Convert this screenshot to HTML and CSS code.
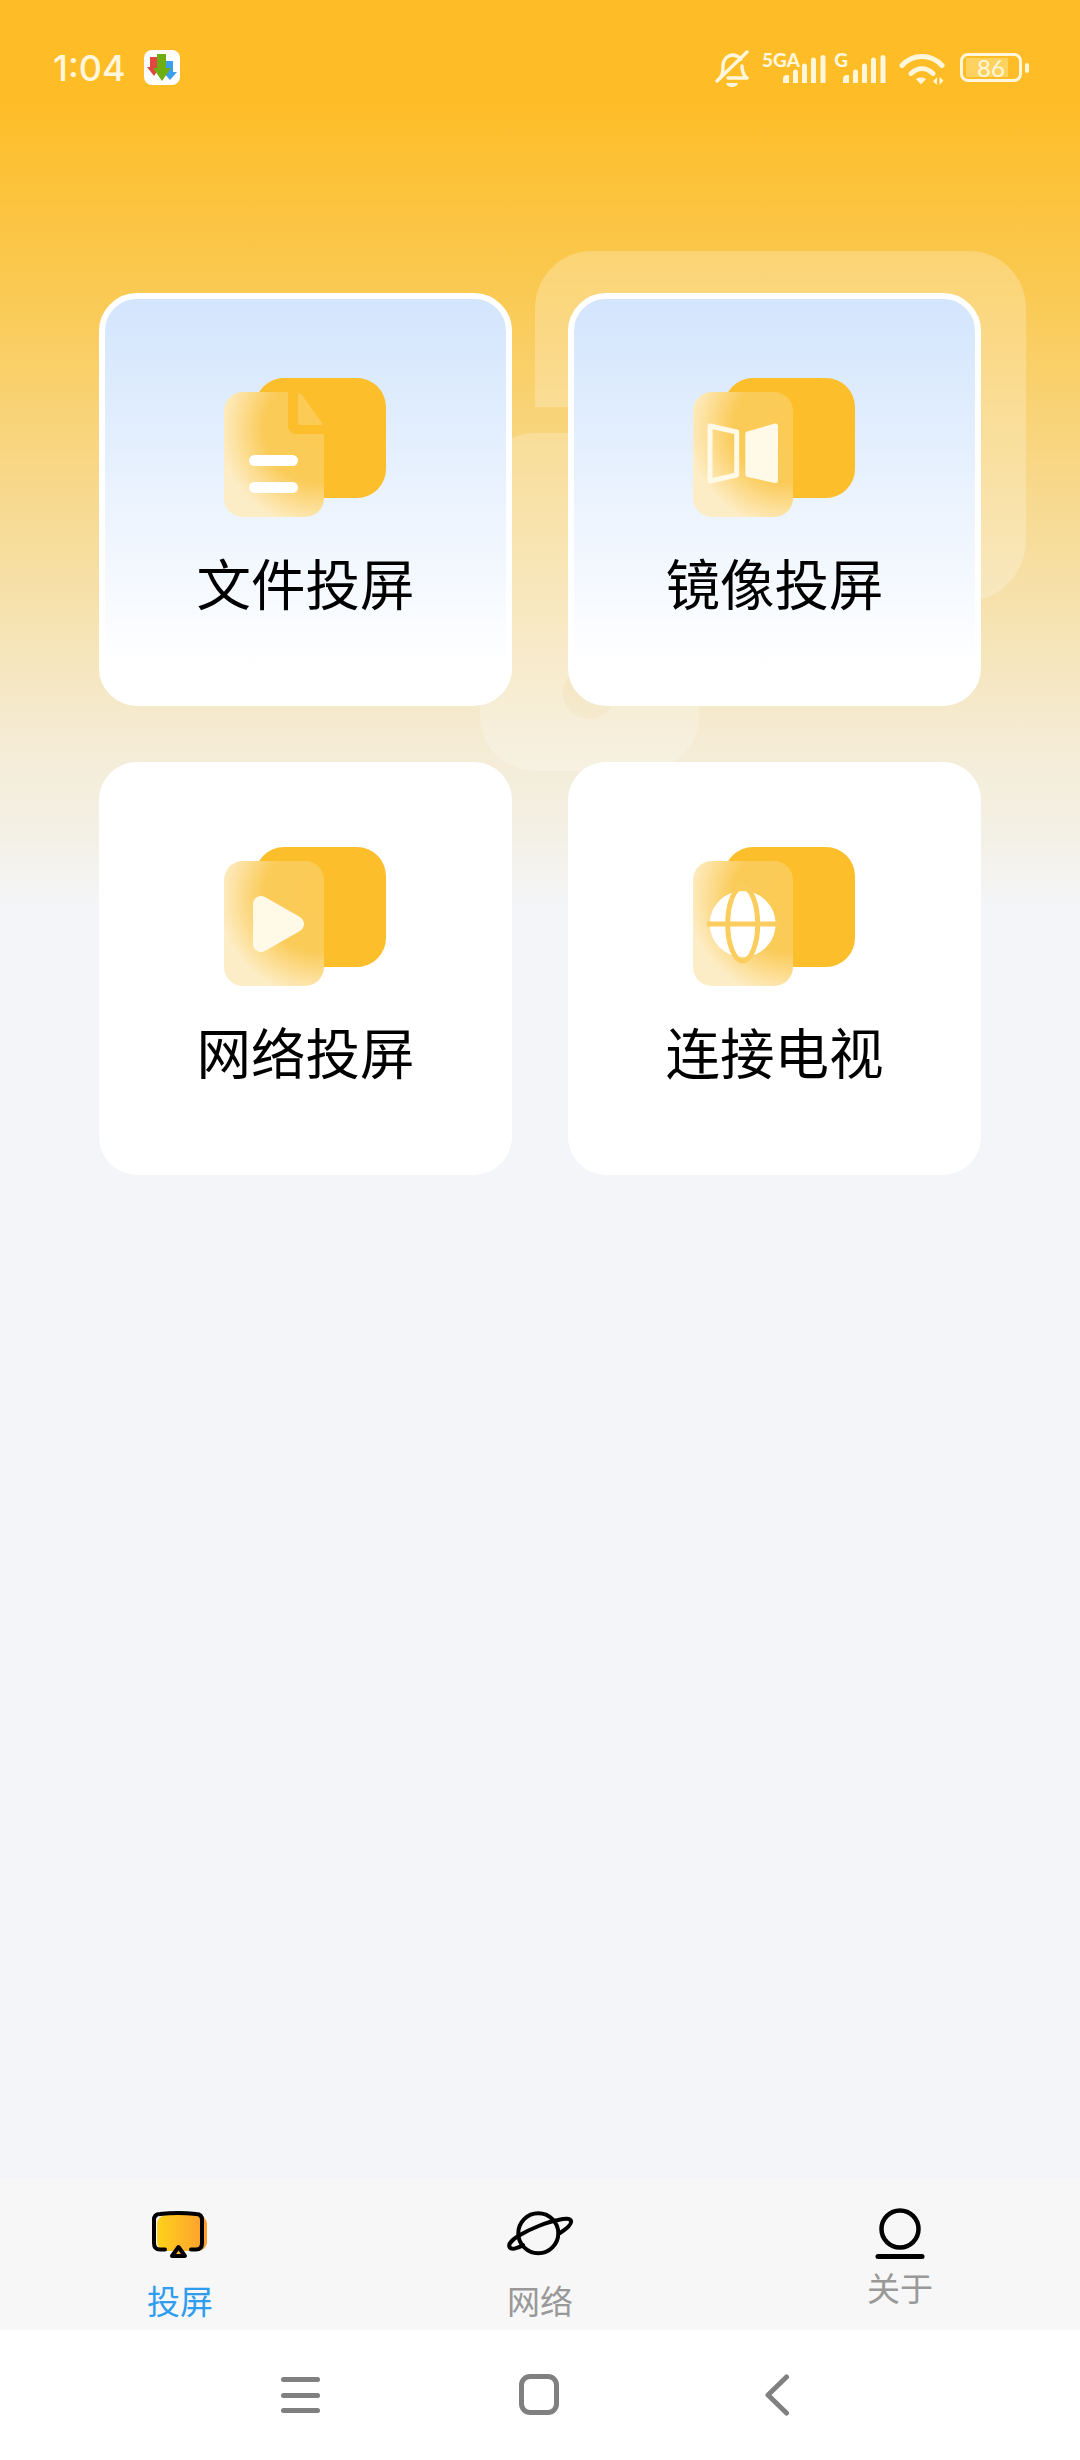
FILE: index.html
```html
<!DOCTYPE html>
<html lang="zh-CN">
<head>
<meta charset="utf-8">
<title>投屏</title>
<link rel="stylesheet" href="styles.css">
</head>
<body>
<div class="app">
  <svg class="decor" viewBox="0 0 1080 900" aria-hidden="true">
    <path class="decor-a" d="M535 407V308a57 57 0 0 1 57-57H969a57 57 0 0 1 57 57V540a62 62 0 0 1-62 62H640V407Z"/>
    <path class="decor-b" fill-rule="evenodd" d="M535 433H644a55 55 0 0 1 55 55V716a55 55 0 0 1-55 55H535a55 55 0 0 1-55-55V488a55 55 0 0 1 55-55ZM589 667a26 26 0 1 0 .01 0Z"/>
  </svg>

  <header class="status">
    <div class="status-left">
      <span class="time">1:04</span>
      <svg class="app-badge" viewBox="0 0 36 35">
        <rect width="36" height="35" rx="8" fill="#fff"/>
        <path d="M6 7h7v10h3l-6 9-7-9h3Z" fill="#e0483f"/>
        <path d="M22 11h7v11h4l-7 8-7-8h3Z" fill="#3aa0ee"/>
        <path d="M13 4h9v14h5L18 31 9 18h4Z" fill="#6fae12"/>
      </svg>
    </div>
    <div class="status-right">
      <svg class="ic-bell" viewBox="0 0 34 38">
        <path d="M5 28c3-3 3-7 3-12 0-6 4-11 10-11 3 0 6 2 8 4M27 16c0 5 1 9 5 12H13" fill="none" stroke="#fff6dc" stroke-width="3.400" stroke-linecap="round" stroke-linejoin="round"/>
        <path d="M2 31 32 2" stroke="#fff6dc" stroke-width="3.400" stroke-linecap="round"/>
        <path d="M11 33h12c-1 3-3 4-6 4S12 36 11 33Z" fill="#fff6dc"/>
      </svg>
      <div class="signal signal-5g">
        <span class="net">5GA</span>
        <svg class="bars" viewBox="0 0 43 28"><path d="M0 24a4 4 0 0 1 4-4h2v8H0ZM10 17a2.500 2.500 0 0 1 5 0V28h-5ZM19 11a2.500 2.500 0 0 1 5 0V28h-5ZM28 5a2.500 2.500 0 0 1 5 0V28h-5ZM37.500 2.500a2.500 2.500 0 0 1 5 0V28h-5Z" fill="#fff6dc"/></svg>
      </div>
      <div class="signal signal-g">
        <span class="net">G</span>
        <svg class="bars" viewBox="0 0 43 28"><path d="M0 24a4 4 0 0 1 4-4h2v8H0ZM10 17a2.500 2.500 0 0 1 5 0V28h-5ZM19 11a2.500 2.500 0 0 1 5 0V28h-5ZM28 5a2.500 2.500 0 0 1 5 0V28h-5ZM37.500 2.500a2.500 2.500 0 0 1 5 0V28h-5Z" fill="#fff6dc"/></svg>
      </div>
      <svg class="ic-wifi" viewBox="0 0 46 32">
        <path d="M3 12.500C14 .500 32 .500 43 12.500M12 20.500c7-6.500 15-6.500 22 0" fill="none" stroke="#fff6dc" stroke-width="5" stroke-linecap="round"/>
        <path d="M17 26c2.500-2 7-2 10 0l-5 5.500Z" fill="#fff6dc"/>
        <path d="M38 24v8l-4-3.500ZM40.500 32v-8l4 3.500Z" fill="#fff6dc"/>
      </svg>
      <div class="battery">
        <div class="battery-body"><span class="battery-level"></span><span class="battery-num">86</span></div>
        <span class="battery-nub"></span>
      </div>
    </div>
  </header>

  <svg class="defs" aria-hidden="true">
    <defs>
      <radialGradient id="glass" gradientUnits="userSpaceOnUse" cx="95" cy="50" r="100">
        <stop offset="0" stop-color="#fbcb55"/>
        <stop offset=".55" stop-color="#fbcb58"/>
        <stop offset="1" stop-color="#fdedc6"/>
      </radialGradient>
    </defs>
  </svg>

  <main class="grid">
    <a class="card card-active">
      <svg class="card-icon" viewBox="0 0 162 139">
        <rect class="back" x="31" width="131" height="120" rx="29"/>
        <path class="front" d="M19 14H64V48a8 8 0 0 0 8 8H100V120a19 19 0 0 1-19 19H19a19 19 0 0 1-19-19V33a19 19 0 0 1 19-19Z"/>
        <path class="fold" d="M74 18c0-3 2-4 4-1L98 45c1 1 0 2-1 2H76a2 2 0 0 1-2-2Z"/>
        <rect class="mark" x="25" y="77" width="49" height="11" rx="5.500"/>
        <rect class="mark" x="25" y="104" width="49" height="11" rx="5.500"/>
      </svg>
      <span class="card-label">文件投屏</span>
    </a>
    <a class="card card-active">
      <svg class="card-icon" viewBox="0 0 162 139">
        <rect class="back" x="31" width="131" height="120" rx="29"/>
        <rect class="front" y="14" width="100" height="125" rx="19"/>
        <path class="mark-line" d="M17 48 43.700 54V97L17 103Z"/>
        <path class="mark-solid" d="M54.800 56 82.500 48V102.500L54.800 96.500Z"/>
      </svg>
      <span class="card-label">镜像投屏</span>
    </a>
    <a class="card">
      <svg class="card-icon" viewBox="0 0 162 139">
        <rect class="back" x="31" width="131" height="120" rx="29"/>
        <rect class="front" y="14" width="100" height="125" rx="19"/>
        <path class="mark-play" d="M37 57 72 77 37 97Z"/>
      </svg>
      <span class="card-label">网络投屏</span>
    </a>
    <a class="card">
      <svg class="card-icon" viewBox="0 0 162 139">
        <rect class="back" x="31" width="131" height="120" rx="29"/>
        <rect class="front" y="14" width="100" height="125" rx="19"/>
        <circle class="mark" cx="49.700" cy="77" r="33"/>
        <ellipse class="globe-cut" cx="49.700" cy="77" rx="15" ry="37"/>
        <path class="globe-cut" d="M14 77H86"/>
      </svg>
      <span class="card-label">连接电视</span>
    </a>
  </main>

  <div class="spacer"></div>

  <nav class="tabs">
    <div class="tab tab-active">
      <svg class="tab-icon" viewBox="0 0 60 54">
        <defs><linearGradient id="cast"><stop offset="0" stop-color="#fdd21a"/><stop offset="1" stop-color="#ff9c30"/></linearGradient></defs>
        <rect x="7" y="7" width="50" height="36" rx="9" fill="url(#cast)"/>
        <path d="M15 41.500H10Q4 41.500 4 35V12Q4 6 10 6Q28 4 46 6Q52 6 52 12V35Q52 41.500 46 41.500H41" fill="none" stroke="#000" stroke-width="4" stroke-linecap="round"/>
        <path d="M28.500 39 35 48H22Z" fill="#fdb42a" stroke="#000" stroke-width="4" stroke-linejoin="round"/>
      </svg>
      <span class="tab-label">投屏</span>
    </div>
    <div class="tab">
      <svg class="tab-icon" viewBox="0 0 70 54">
        <circle cx="33.300" cy="25.300" r="20" fill="none" stroke="#000" stroke-width="4"/>
        <path d="M18 37C12 41 6 42 4.500 39 3 36 8 31 15 27 25 21 42 14 53 12 60 10.500 65 10 66 13 67 16 61 21 55 25" fill="none" stroke="#000" stroke-width="4" stroke-linecap="round"/>
      </svg>
      <span class="tab-label">网络</span>
    </div>
    <div class="tab tab-tight">
      <svg class="tab-icon" viewBox="0 0 60 54">
        <circle cx="30" cy="21" r="18.500" fill="none" stroke="#000" stroke-width="4.500"/>
        <path d="M8 48.500H52" stroke="#000" stroke-width="5" stroke-linecap="round"/>
      </svg>
      <span class="tab-label">关于</span>
    </div>
  </nav>

  <footer class="sysnav">
    <span class="sys-menu"><i></i><i></i><i></i></span>
    <span class="sys-home"></span>
    <svg class="sys-back" viewBox="0 0 27 42"><path d="M23.500 3 5 21 23.500 39" fill="none" stroke="#808080" stroke-width="5" stroke-linecap="round" stroke-linejoin="round"/></svg>
  </footer>
</div>
</body>
</html>
```
FILE: styles.css
```css
* { box-sizing: border-box; }
html, body { margin: 0; padding: 0; }
body {
  width: 1080px;
  height: 2460px;
  overflow: hidden;
  font-family: "Noto Sans CJK SC", "Noto Sans", sans-serif;
}
.app {
  position: relative;
  width: 1080px;
  height: 2460px;
  display: flex;
  flex-direction: column;
  background: linear-gradient(180deg, #febd27 0, #febd27 99px, #fac951 285px, #f8d682 453px, #f6e3b2 621px, #f5ebd3 734px, #f3f1e8 846px, #f4f5f9 910px, #f4f5f9 100%);
}
.decor {
  position: absolute;
  left: 0;
  top: 0;
  width: 1080px;
  height: 900px;
}
.decor-a { fill: #fff; fill-opacity: .24; }
.decor-b { fill: #fff; fill-opacity: .22; }
.defs { position: absolute; width: 0; height: 0; }

.status {
  position: relative;
  height: 135px;
  padding: 50px 51px 0 53px;
  display: flex;
  justify-content: space-between;
  align-items: flex-start;
}
.status-left { display: flex; align-items: flex-start; gap: 18px; }
.time {
  font-family: "Inter", "Noto Sans", sans-serif;
  font-size: 36px;
  line-height: 36px;
  font-weight: 500;
  color: #fff6dc;
}
.app-badge { width: 36px; height: 35px; display: block; }
.status-right { display: flex; align-items: flex-start; }
.ic-bell { width: 34px; height: 38px; margin-right: 9px; }
.signal {
  position: relative;
  width: 43px;
  height: 32px;
  margin-top: 3px;
}
.signal-5g { margin-left: 25px; }
.signal-g { margin-left: 17px; }
.net {
  position: absolute;
  top: -1px;
  font-family: "Lato", "Noto Sans", sans-serif;
  font-weight: 900;
  font-size: 19px;
  line-height: 16px;
  color: #fff6dc;
  white-space: nowrap;
}
.signal-5g .net { right: 26px; }
.signal-g .net { right: 38px; }
.bars { position: absolute; left: 0; top: 2px; width: 43px; height: 28px; }
.ic-wifi { width: 46px; height: 32px; margin: 3px 0 0 13px; }
.battery { display: flex; align-items: center; gap: 3px; margin: 3px 0 0 15px; }
.battery-body {
  position: relative;
  width: 62px;
  height: 29px;
  border: 3.500px solid #fff6dc;
  border-radius: 8px;
}
.battery-level {
  position: absolute;
  left: 3px;
  top: 2px;
  bottom: 2px;
  width: 42px;
  background: #fed25f;
}
.battery-num {
  position: absolute;
  left: 0;
  right: 0;
  top: -3px;
  text-align: center;
  font-family: "Lato", "Noto Sans", sans-serif;
  font-size: 24px;
  line-height: 29px;
  color: #fff6dc;
}
.battery-nub { width: 4px; height: 10px; border-radius: 2px; background: #fff6dc; }

.grid {
  position: relative;
  margin: 158px 99px 0;
  display: grid;
  grid-template-columns: 413px 413px;
  grid-auto-rows: 413px;
  gap: 56px;
}
.card {
  display: flex;
  flex-direction: column;
  align-items: center;
  padding-top: 85px;
  background: #fff;
  border-radius: 38px;
}
.card-active {
  padding-top: 79px;
  border: 6px solid #fff;
  background: linear-gradient(180deg, #d3e5fd 0, #fff 92%);
}
.card-icon { width: 162px; height: 139px; display: block; flex: none; margin-left: -2px; }
.back { fill: #fcbe2b; }
.front { fill: url(#glass); }
.fold { fill: #fbcb55; }
.mark { fill: #fff; }
.mark-line { fill: none; stroke: #fff9e8; stroke-width: 5; stroke-linejoin: round; }
.mark-solid { fill: #fff9e8; stroke: #fff9e8; stroke-width: 5; stroke-linejoin: round; }
.mark-play { fill: #fff9e8; stroke: #fff9e8; stroke-width: 16; stroke-linejoin: round; }
.globe-cut { fill: none; stroke: #fbcd5f; stroke-width: 5; }
.card-label {
  margin-top: 30px;
  font-size: 54.500px;
  line-height: 70px;
  color: #000;
}

.spacer { flex: 1; }

.tabs {
  position: relative;
  height: 152px;
  padding-top: 30px;
  display: grid;
  grid-template-columns: 360px 360px 360px;
  background: #f7f7f7;
}
.tab { display: flex; flex-direction: column; align-items: center; }
.tab-icon { height: 54px; display: block; flex: none; }
.tab-label {
  margin-top: 18px;
  font-size: 33px;
  line-height: 40px;
  color: #999;
}
.tab-active .tab-label { color: #2e9df0; }
.tab-tight .tab-label { margin-top: 5px; }

.sysnav {
  height: 130px;
  background: #fff;
  display: grid;
  grid-template-columns: 40px 40px 27px;
  justify-content: start;
  align-items: start;
  column-gap: 198px;
  padding: 44px 0 0 281px;
}
.sys-menu { display: flex; flex-direction: column; gap: 10.500px; padding-top: 3px; }
.sys-menu i { display: block; width: 39px; height: 5px; border-radius: 2.500px; background: #808080; }
.sys-home { width: 40px; height: 41px; border: 5px solid #808080; border-radius: 11px; }
.sys-back { width: 27px; height: 42px; margin-left: 6px; }
```
